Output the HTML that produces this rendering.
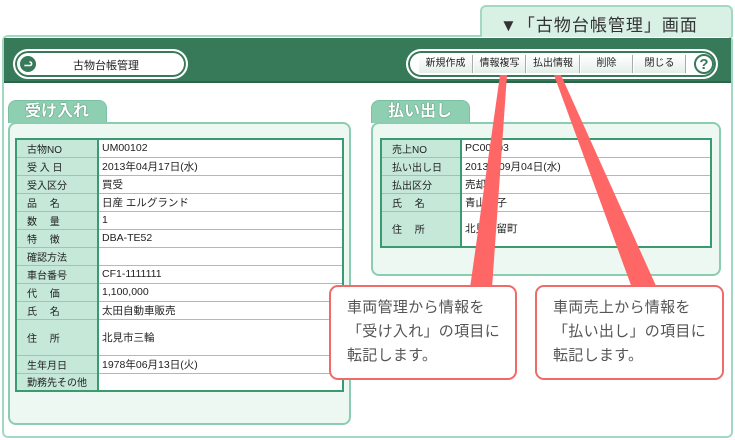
<!DOCTYPE html>
<html><head><meta charset="utf-8"><style>
*{margin:0;padding:0;box-sizing:border-box}
body{width:735px;height:440px;background:#fff;position:relative;overflow:hidden;font-family:"Liberation Sans","Noto Sans CJK JP",sans-serif;color:#222}
.abs{position:absolute}
.frame{left:2px;top:35px;width:731px;height:403px;border:2px solid #a3d8c3;border-radius:6px;background:#fff}
.toptab{left:480px;top:5px;width:253px;height:32px;background:#d9f0e5;border:2px solid #a3d8c3;border-bottom:none;border-radius:6px 6px 0 0;font-size:17px;color:#333;padding:4px 0 0 18px;letter-spacing:1px}
.bar{left:4px;top:38px;width:727px;height:45px;background:#377a5a;border-bottom:2px solid #2b6448}
.pill{background:#fff;border:2px solid #fff;box-shadow:inset 0 0 0 2px #377a5a;border-radius:16px}
.btn{position:absolute;top:55px;height:18px;background:linear-gradient(#fff,#e4efe9);border-right:1px solid #aaa;font-size:10px;text-align:center;line-height:18px;color:#222}
.tab{height:23px;background:#8ecfb2;border:1px solid #7cc0a3;border-bottom:none;border-radius:8px 8px 0 0;color:#fff;font-size:16px;font-weight:bold;padding-left:16px;line-height:22px;text-shadow:0 0 1px #3a7a5c,0 0 1px #3a7a5c}
.panel{background:#edf8f2;border:2px solid #8ccdb1;border-radius:8px}
table{position:absolute;border-collapse:collapse;border:2px solid #3a9a70;background:#fff;font-size:10.5px}
td{border:1px solid #8ccfb0;height:18px;padding:0 3px;white-space:nowrap}
td.l{background:#c5e8d8;padding-left:10px;font-size:10px;border-right:2px solid #3a9a70}
.call{background:#fff;border:2px solid #f06a6a;border-radius:9px;font-size:15px;color:#555;line-height:24px;padding:9px 0 0 16px;letter-spacing:0.3px}
</style></head><body>
<div class="abs frame"></div>
<div class="abs toptab">▼「古物台帳管理」画面</div>
<div class="abs bar"></div>
<div class="abs pill" style="left:13px;top:49px;width:175px;height:30px"></div>
<div class="abs" style="left:20px;top:56px;width:16px;height:16px;border-radius:50%;background:#377a5a"></div>
<div class="abs" style="left:24px;top:58px;color:#fff;font-size:10px;font-weight:bold">ᓗ</div>
<div class="abs" style="left:73px;top:57px;font-size:11px">古物台帳管理</div>
<div class="abs pill" style="left:406px;top:49px;width:312px;height:30px"></div>
<div class="btn" style="left:419px;width:54px">新規作成</div>
<div class="btn" style="left:474px;width:52px">情報複写</div>
<div class="btn" style="left:527px;width:53px">払出情報</div>
<div class="btn" style="left:581px;width:52px">削除</div>
<div class="btn" style="left:634px;width:52px">閉じる</div>
<div class="abs" style="left:694px;top:54px;width:20px;height:20px;border-radius:50%;background:#fff;border:2px solid #377a5a;color:#377a5a;font-weight:bold;font-size:15px;text-align:center;line-height:17px">?</div>

<div class="abs tab" style="left:8px;top:100px;width:99px">受け入れ</div>
<div class="abs panel" style="left:8px;top:122px;width:343px;height:303px"></div>
<table style="left:15px;top:138px;width:329px">
<colgroup><col style="width:82px"><col></colgroup>
<tr><td class="l">古物NO</td><td>UM00102</td></tr>
<tr><td class="l">受 入 日</td><td>2013年04月17日(水)</td></tr>
<tr><td class="l">受入区分</td><td>買受</td></tr>
<tr><td class="l">品　 名</td><td>日産 エルグランド</td></tr>
<tr><td class="l">数　 量</td><td>1</td></tr>
<tr><td class="l">特　 徴</td><td>DBA-TE52</td></tr>
<tr><td class="l">確認方法</td><td></td></tr>
<tr><td class="l">車台番号</td><td>CF1-1111111</td></tr>
<tr><td class="l">代　 価</td><td>1,100,000</td></tr>
<tr><td class="l">氏　 名</td><td>太田自動車販売</td></tr>
<tr><td class="l" style="height:36px">住　 所</td><td>北見市三輪</td></tr>
<tr><td class="l">生年月日</td><td>1978年06月13日(火)</td></tr>
<tr><td class="l">勤務先その他</td><td></td></tr>
</table>

<div class="abs tab" style="left:371px;top:100px;width:99px">払い出し</div>
<div class="abs panel" style="left:371px;top:122px;width:350px;height:154px"></div>
<table style="left:380px;top:138px;width:332px">
<colgroup><col style="width:80px"><col></colgroup>
<tr><td class="l">売上NO</td><td>PC00103</td></tr>
<tr><td class="l">払い出し日</td><td>2013年09月04日(水)</td></tr>
<tr><td class="l">払出区分</td><td>売却</td></tr>
<tr><td class="l">氏　 名</td><td>青山花子</td></tr>
<tr><td class="l" style="height:36px">住　 所</td><td>北見市留町</td></tr>
</table>

<svg class="abs" style="left:0;top:0" width="735" height="440">
<polygon points="500,75 507,75 492,288 470,288" fill="#ff6666"/>
<polygon points="554,75 561,75 657,288 632,288" fill="#ff6666"/>
</svg>
<div class="abs call" style="left:329px;top:285px;width:188px;height:95px">車両管理から情報を<br>「受け入れ」の項目に<br>転記します。</div>
<div class="abs call" style="left:535px;top:285px;width:189px;height:95px">車両売上から情報を<br>「払い出し」の項目に<br>転記します。</div>
</body></html>
